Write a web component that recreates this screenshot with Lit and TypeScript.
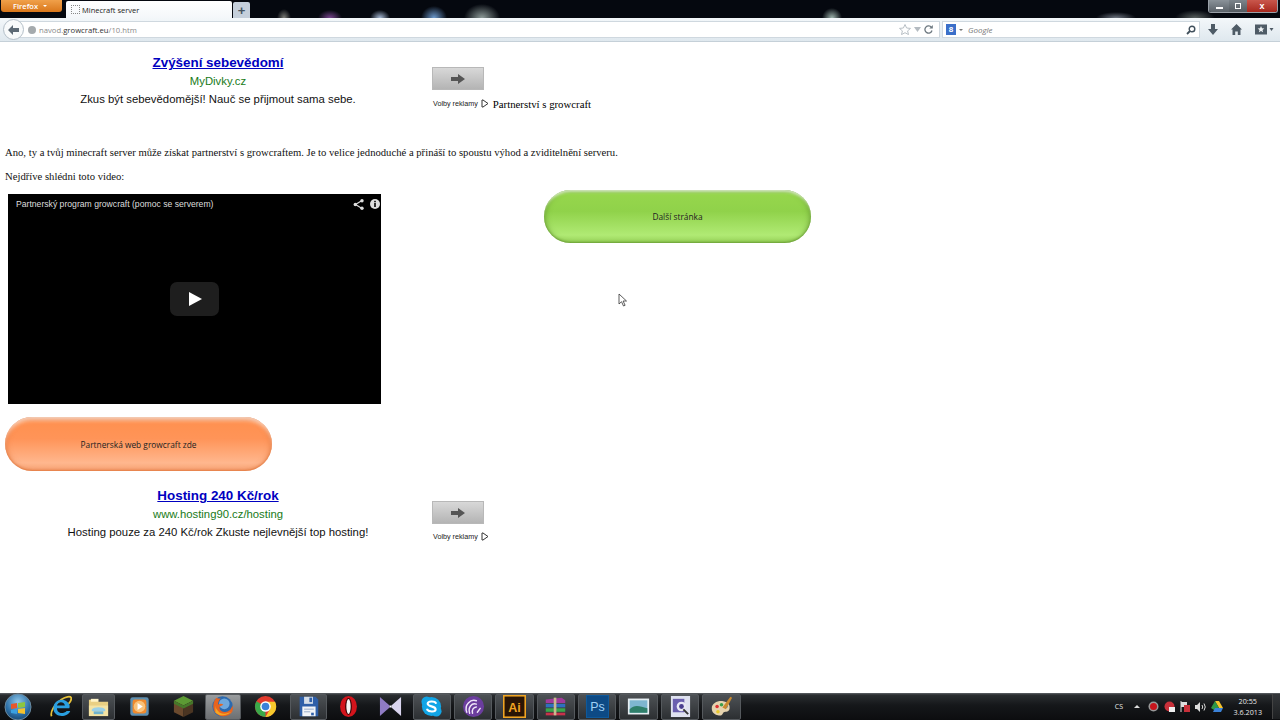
import { LitElement, html, css, svg } from "lit";
import { customElement } from "lit/decorators.js";

const orb = svg`<svg width="30" height="30" viewBox="0 0 30 30"><defs><radialGradient id="o" cx=".5" cy=".3" r=".8"><stop offset="0" stop-color="#8fc6e8"/><stop offset=".6" stop-color="#2b6ea6"/><stop offset="1" stop-color="#123a5e"/></radialGradient></defs><circle cx="15" cy="15" r="13" fill="url(#o)" stroke="#6b8aa0"/><path d="M8 12l6-1v5l-6 1z" fill="#e8562a"/><path d="M15 11l7-1v5l-7 1z" fill="#8cc63f"/><path d="M8 18l6-1v5l-6-1z" fill="#3aa0e0"/><path d="M15 17l7-1v6l-7-1z" fill="#f5c22d"/></svg>`;
const ie = svg`<svg width="26" height="26" viewBox="0 0 26 26"><path d="M3 24C1 20 6 10 14 5c5-3 10-4 11-2 1 3-2 6-3 7" fill="none" stroke="#e8c23a" stroke-width="2"/><path d="M21 15H9c0 6 7 7 11 3h4c-3 8-19 8-19-3S19 2 23 11c.5 1 .5 3-.1 4zM9 12h9c-1-5-8-5-9 0z" fill="#2a9fe0"/></svg>`;
const folder = svg`<svg width="24" height="24" viewBox="0 0 24 24"><path d="M2 5h8l2 2h10v15H2z" fill="#e9cf82"/><path d="M4 4h8v3H4z" fill="#fff4c8"/><path d="M2 11h20v11H2z" fill="#f4e3a3"/><path d="M7 17h10v3H7z" fill="#6fb3cf"/><path d="M5 15c2-3 12-3 14 0v2H5z" fill="#9bd0e6"/></svg>`;
const media = svg`<svg width="20" height="20" viewBox="0 0 20 20"><rect x="2" y="2" width="16" height="16" rx="2" fill="#5f8fb0"/><rect x="4" y="4" width="12" height="12" rx="2" fill="#ef8a2d"/><circle cx="10" cy="10" r="5" fill="#f8c27a"/><path d="M8.300 7l4.500 3-4.500 3z" fill="#fff"/></svg>`;
const grass = svg`<svg width="22" height="24" viewBox="0 0 22 24"><path d="M11 1l10 5-10 5L1 6z" fill="#5c9a34"/><path d="M1 6l10 5v12L1 18z" fill="#6b4a2e"/><path d="M21 6l-10 5v12l10-5z" fill="#4b3522"/><path d="M1 6l10 5v3L1 9zM21 6l-10 5v3l10-5z" fill="#46782a"/></svg>`;
const fox = svg`<svg width="26" height="26" viewBox="0 0 26 26"><circle cx="13" cy="13" r="11.500" fill="#2b6ab0"/><circle cx="15" cy="10" r="6" fill="#6fa8dc"/><path d="M6 3c-4 5-5 13 0 18 5 5 14 4 18-2 1-3 1-5 0-7-1 5-5 8-10 7-4-1-5-4-4-6l4-2c-2-2-5-1-6 0 0-3 1-5 3-7-2 0-4 0-5-1z" fill="#e8641f"/><path d="M5 20c5 4 13 4 18-1-4 2-9 3-13 1-3-2-5-5-5-8z" fill="#f5a623"/></svg>`;
const chrome = svg`<svg width="24" height="24" viewBox="0 0 24 24"><circle cx="12" cy="12" r="11" fill="#e33b2e"/><path d="M12 12L2.500 6.500A11 11 0 0 0 12 23z" fill="#3ba84a"/><path d="M12 7h10a11 11 0 0 1-10 16l5-9z" fill="#f7c92c"/><circle cx="12" cy="12" r="5.500" fill="#fff"/><circle cx="12" cy="12" r="4" fill="#3b82d8"/></svg>`;
const save = svg`<svg width="24" height="26" viewBox="0 0 24 26"><path d="M2 2h18l3 3v19H2z" fill="#2f5fa8"/><rect x="7" y="2" width="10" height="8" fill="#d4dde8"/><rect x="13" y="3" width="3" height="5" fill="#2f5fa8"/><rect x="5" y="13" width="15" height="11" fill="#f2f4f7"/><path d="M7 16h11M7 19h7" stroke="#8ca3c4"/><rect x="15" y="20" width="3" height="3" fill="#2f5fa8"/></svg>`;
const opera = svg`<svg width="20" height="26" viewBox="0 0 20 26"><ellipse cx="10" cy="13" rx="9.500" ry="12" fill="#d3141c"/><ellipse cx="10" cy="13" rx="3.800" ry="9.500" fill="#3a0507"/><ellipse cx="10" cy="13" rx="2.400" ry="8.500" fill="#f5f5f5"/></svg>`;
const vs = svg`<svg width="24" height="22" viewBox="0 0 24 22"><path d="M1 1l10 9v2L1 21z" fill="#8f7bc4"/><path d="M23 1L13 10v2l10 9z" fill="#d9d4ee"/><path d="M11 10h2v2h-2z" fill="#fff"/></svg>`;
const skype = svg`<svg width="24" height="24" viewBox="0 0 24 24"><circle cx="7" cy="7" r="5.500" fill="#12a5e6"/><circle cx="17" cy="17" r="5.500" fill="#12a5e6"/><circle cx="12" cy="12" r="10" fill="#12a5e6"/><path d="M16.500 8.300C15.500 6.300 8 6 8 9.200c0 3.300 8.300 2 8.300 5.600 0 3.200-7 3-8.800.4" fill="none" stroke="#fff" stroke-width="2.200" stroke-linecap="round"/></svg>`;
const torrent = svg`<svg width="24" height="24" viewBox="0 0 24 24"><circle cx="12" cy="12" r="11" fill="#6b3d9e"/><g fill="none" stroke="#efe6f8" stroke-width="1.500" stroke-linecap="round"><path d="M5 18C2 10 9 4 15 6"/><path d="M8 19C6 13 10 8 15 9.500"/><path d="M11 19c-1-4 1-6 4-6.500"/><path d="M16 18l3-4"/></g></svg>`;
const ai = svg`<svg width="22" height="22" viewBox="0 0 22 22"><rect width="22" height="22" fill="#f0a422"/><rect x="1.500" y="1.500" width="19" height="19" fill="#2a1505"/><text x="11" y="16" text-anchor="middle" font-family="Liberation Sans" font-weight="700" font-size="12" fill="#f0a422">Ai</text></svg>`;
const rar = svg`<svg width="26" height="22" viewBox="0 0 26 22"><path d="M2 3l18-2 4 3v3H2z" fill="#a03a9a"/><path d="M2 8h22v4H2z" fill="#2f6fc0"/><path d="M2 13h22v4H2z" fill="#3aa54a"/><path d="M2 18h22v3H2z" fill="#c8324a"/><rect x="11" y="1" width="3" height="20" fill="#c9b98f"/></svg>`;
const ps = svg`<svg width="24" height="24" viewBox="0 0 24 24"><rect width="24" height="24" fill="#0f5a9c"/><rect x="1" y="1" width="22" height="22" fill="#0d4a85"/><text x="12" y="17" text-anchor="middle" font-family="Liberation Sans" font-size="13" fill="#9fd0f5">Ps</text></svg>`;
const photo = svg`<svg width="26" height="22" viewBox="0 0 26 22"><rect x="1" y="2" width="24" height="18" fill="#e6eef2"/><rect x="3" y="4" width="20" height="14" fill="#7fb6d0"/><path d="M3 14c6-6 12-3 20-1v5H3z" fill="#2f7f6a"/></svg>`;
const note = svg`<svg width="22" height="24" viewBox="0 0 22 24"><rect x="1" y="1" width="20" height="22" fill="#dfe2f0"/><rect x="3" y="4" width="12" height="14" fill="#6a5fae"/><circle cx="12" cy="12" r="5" fill="#e8e8f4"/><circle cx="12" cy="12" r="2.500" fill="#4a3f8f"/><path d="M14 15l5 5" stroke="#333" stroke-width="2"/></svg>`;
const paint = svg`<svg width="26" height="26" viewBox="0 0 26 26"><path d="M2 15C2 9 9 6 15 7c6 1 8 5 7 9-1 4-6 2-7 4s-2 4-6 3c-4-1-7-3-7-8z" fill="#e6d3ae"/><circle cx="8" cy="13" r="2" fill="#d33"/><circle cx="13" cy="11" r="2" fill="#3a9e4a"/><circle cx="18" cy="13" r="2" fill="#2f6fc0"/><circle cx="9" cy="19" r="2" fill="#e8c82a"/><path d="M14 14L23 2l2 1-7 13z" fill="#c98a2f"/></svg>`;

const tasks: { w: number; icon: unknown; on?: boolean; lit?: boolean }[] = [
  { w: 40, icon: ie },
  { w: 36, icon: folder, on: true },
  { w: 47, icon: media },
  { w: 40, icon: grass },
  { w: 39, icon: fox, on: true, lit: true },
  { w: 46, icon: chrome },
  { w: 40, icon: save, on: true },
  { w: 41, icon: opera },
  { w: 42, icon: vs },
  { w: 41.4, icon: skype, on: true },
  { w: 41.4, icon: torrent, on: true },
  { w: 41.4, icon: ai, on: true },
  { w: 41.4, icon: rar, on: true },
  { w: 41.4, icon: ps, on: true },
  { w: 41.4, icon: photo, on: true },
  { w: 41.4, icon: note, on: true },
  { w: 41.4, icon: paint, on: true },
];

const arrowBtn = html`<div class="arrow-btn"><svg width="14" height="10" viewBox="0 0 14 10"><path d="M0 3h7V0l7 5-7 5V7H0z" fill="#555"/></svg></div>`;
const volby = html`<div class="volby">Volby reklamy <svg width="8" height="9" viewBox="0 0 8 9"><path d="M1 1v7h1L7 4.500 2 1z" fill="none" stroke="#333"/></svg></div>`;

@customElement("app-root")
export class AppRoot extends LitElement {
  static styles = css`
    :host { display: block; width: 1280px; height: 720px; position: relative; overflow: hidden; background: #fff; }
    .win { display: flex; flex-direction: column; height: 720px; }
    .titlebar {
      height: 18px; flex: none; display: flex; align-items: flex-end; position: relative; background:
        radial-gradient(ellipse 7px 9px at 284px 18px, #7f7f7a, transparent),
        radial-gradient(ellipse 12px 8px at 330px 18px, #7a4590, transparent),
        radial-gradient(ellipse 10px 8px at 380px 18px, #a9bcd8, transparent),
        radial-gradient(ellipse 13px 12px at 434px 18px, #6d9bd0, transparent),
        radial-gradient(ellipse 18px 14px at 482px 18px, #8f9c9a, transparent),
        radial-gradient(ellipse 10px 10px at 832px 18px, #9fb5ae, transparent),
        radial-gradient(ellipse 20px 6px at 1116px 18px, #6d7480, transparent),
        radial-gradient(ellipse 20px 8px at 1195px 18px, #59605f, transparent),
        #05080f;
    }
    .ffx {
      position: absolute; left: 1px; top: 0; width: 61px; height: 12px; background: linear-gradient(#f0a04a, #d9761a);
      border-radius: 0 0 3px 3px; color: #fff; font: 600 7.500px "Open Sans", sans-serif; display: flex; align-items: center; gap: 5px; padding-left: 12px; box-sizing: border-box;
    }
    .ffx i { width: 0; height: 0; border: 2.500px solid transparent; border-top-color: #fff; margin-top: 2px; }
    .tab {
      margin-left: 66px; width: 166px; height: 17px; background: linear-gradient(#fff, #f4f7fa); border-radius: 2px 2px 0 0;
      display: flex; align-items: center; padding-left: 5px; box-sizing: border-box; font: 7.500px "Open Sans", sans-serif; color: #222; gap: 2px;
    }
    .tab b { width: 9px; height: 9px; border: 1px dotted #888; box-sizing: border-box; }
    .plus { margin-left: 1px; width: 17px; height: 16px; background: #c5cfdb; border-radius: 2px 2px 0 0; display: flex; align-items: center; justify-content: center; color: #46535f; font: 700 13px "Liberation Sans", sans-serif; }
    .caps { position: absolute; right: 2px; top: 0; display: flex; height: 12px; border: 1px solid #9aa0a8; border-top: none; border-radius: 0 0 3px 3px; overflow: hidden; }
    .caps span { display: flex; align-items: center; justify-content: center; color: #fff; font: 700 9px "Liberation Sans", sans-serif; }
    .c1 { width: 20px; background: linear-gradient(#8a9299, #5a6168); }
    .c2 { width: 18px; background: linear-gradient(#7c848b, #545a60); }
    .c3 { width: 30px; background: linear-gradient(#c9574c, #a8281e); }
    .c1 u { display: block; width: 7px; height: 2px; background: #fff; margin-top: 4px; }
    .c2 u { display: block; width: 6px; height: 6px; border: 1px solid #fff; box-sizing: border-box; }
    .toolbar { height: 24px; flex: none; background: linear-gradient(#f3f7fa, #dfe8ee); border-bottom: 1px solid #c5d0d8; box-sizing: border-box; display: flex; align-items: center; position: relative; padding-right: 6px; }
    .back { width: 21px; height: 21px; margin-left: 3px; border-radius: 50%; background: #f8fafb; border: 1px solid #b4bfc8; box-sizing: border-box; display: flex; align-items: center; justify-content: center; flex: none; position: relative; z-index: 1; }
    .url { margin-left: -7px; width: 923px; height: 17px; background: #fff; border: 1px solid #cfd8df; box-sizing: border-box; display: flex; align-items: center; padding-left: 10px; font: 7.700px "Open Sans", sans-serif; color: #8a8a8a; flex: none; }
    .url .g { width: 8px; height: 8px; border-radius: 50%; background: #a5aaad; margin-right: 3px; }
    .url strong { font-weight: 400; color: #333; }
    .url .spacer { flex: 1; }
    .url .r { display: flex; align-items: center; gap: 3px; padding-right: 6px; }
    .search { margin-left: 2px; width: 258px; height: 17px; background: #fff; border: 1px solid #cfd8df; box-sizing: border-box; display: flex; align-items: center; padding: 0 3px; font: italic 8px "Open Sans", sans-serif; color: #777; flex: none; }
    .search .g8 { width: 10px; height: 11px; background: #3b6fc9; color: #fff; font: 700 8px "Liberation Sans", sans-serif; display: flex; align-items: center; justify-content: center; margin-right: 3px; }
    .search .drop { width: 0; height: 0; border: 2px solid transparent; border-top-color: #777; margin: 2px 5px 0 0; }
    .search .spacer { flex: 1; }
    .tools { display: flex; align-items: center; margin-left: 8px; gap: 13px; }
    .page { flex: 1; min-height: 0; display: flex; flex-direction: column; background: #fff; color: #000; }
    .adrow { display: flex; height: 96px; flex: none; }
    .ad { width: 436px; flex: none; text-align: center; font-family: "Liberation Sans", Arial, sans-serif; padding-top: 11px; box-sizing: border-box; }
    .ad a { display: block; font-size: 13.400px; font-weight: 700; line-height: 20px; color: #0000c0; text-decoration: underline; }
    .ad .host { font-size: 11.300px; line-height: 17px; color: #187a18; }
    .ad .desc { font-size: 11.350px; line-height: 19px; color: #111; }
    .side { padding-top: 25px; display: flex; flex-direction: column; }
    .arrow-btn { width: 52px; height: 23px; background: linear-gradient(#d8d8d8, #b4b4b4); border: 1px solid #b8b8b8; box-sizing: border-box; display: flex; align-items: center; justify-content: center; }
    .vline { display: flex; align-items: center; margin-top: 6px; height: 14px; }
    .volby { font: 7.200px "Liberation Sans", Arial, sans-serif; display: flex; align-items: center; gap: 3px; margin-left: 1px; color: #222; white-space: nowrap; }
    .partner { font: 10.800px "Liberation Serif", serif; margin-left: 4px; margin-top: 1px; }
    .para { font: 10.670px/14px "Liberation Serif", serif; margin: 0 0 0 5px; color: #111; }
    .p1 { margin-top: 7px; }
    .p2 { margin-top: 10px; }
    .mid { display: flex; margin-top: 7px; flex: none; }
    .video { width: 373px; height: 210px; margin: 4px 0 0 8px; background: #000; position: relative; flex: none; display: flex; flex-direction: column; }
    .vhead { display: flex; align-items: center; height: 20px; padding: 0 1px 0 8px; color: #ddd; font: 8.650px "Liberation Sans", Arial, sans-serif; }
    .vhead .spacer { flex: 1; }
    .vhead svg { margin-left: 6px; }
    .play { position: absolute; left: 162px; top: 88px; width: 49px; height: 34px; border-radius: 7px; background: #1e1e1e; display: flex; align-items: center; justify-content: center; }
    .pill { border-radius: 27px; display: flex; align-items: center; justify-content: center; font: 8.350px "Open Sans", "Liberation Sans", sans-serif; color: #222; box-sizing: border-box; flex: none; position: relative; }
    .green { width: 267px; height: 53px; margin-left: 163px; background: linear-gradient(#7ab83c 0%, #96d64c 8%, #90d24a 40%, #b0ea74 85%, #96d058 100%);
      box-shadow: inset 0 4px 3px -2px rgba(255,255,255,.7), inset 0 -1px 2px rgba(90,140,40,.6), inset 4px 0 5px -2px rgba(90,140,40,.5), inset -4px 0 5px -2px rgba(90,140,40,.5); }
    .orange { width: 267px; height: 54px; margin: 13px 0 0 5px; background: linear-gradient(#e8834a 0%, #ff9150 10%, #ff9458 40%, #ffb78e 85%, #f5a070 100%);
      box-shadow: inset 0 5px 4px -2px rgba(255,255,255,.65), inset 0 -1px 2px rgba(220,110,50,.6), inset 4px 0 5px -2px rgba(220,110,50,.5), inset -4px 0 5px -2px rgba(220,110,50,.5); }
    .adrow2 { margin-top: 13px; }
    .ad2 { padding-top: 2px; }
    .side2 { padding-top: 17px; }
    .side2 .vline { margin-top: 5px; }
    .cursor { position: absolute; left: 618px; top: 293px; }
    .taskbar { height: 27px; flex: none; background: linear-gradient(#5f6468 0, #2a2d30 2px, #15171a 45%, #0c0d0f 100%); display: flex; align-items: center; position: relative; }
    .start { width: 40px; flex: none; display: flex; justify-content: center; padding-right: 4px; box-sizing: border-box; }
    .task { height: 27px; flex: none; display: flex; align-items: center; justify-content: center; position: relative; }
    .task.on::before { content: ""; position: absolute; top: 1px; bottom: 0; left: 1.500px; right: 1.500px; background: linear-gradient(#4d5155, #2c2f32); border: 1px solid #55595d; border-radius: 2px; box-sizing: border-box; }
    .task.lit::before { background: linear-gradient(#9a9d9f, #6c6f72); }
    .task svg { position: relative; width: 23px; height: 23px; }
    .tray { margin-left: auto; display: flex; align-items: center; color: #e8e8e8; font: 7px "Open Sans", sans-serif; }
    .tray .cs { margin-right: 11px; }
    .tray .up { width: 0; height: 0; border: 3px solid transparent; border-bottom-color: #ddd; margin: -3px 7.500px 0 0; }
    .tray svg { margin-right: 5px; }
    .clock { text-align: center; line-height: 11px; font-size: 7.200px; margin: 0 10px 0 6px; }
    .show { width: 8px; height: 25px; background: linear-gradient(#34373a, #1d1f21); border-left: 1px solid #444; box-sizing: border-box; }
  `;

  render() {
    return html`<div class="win">
      <div class="titlebar">
        <div class="ffx">Firefox<i></i></div>
        <div class="tab"><b></b>Minecraft server</div>
        <div class="plus">+</div>
        <div class="caps"><span class="c1"><u></u></span><span class="c2"><u></u></span><span class="c3">x</span></div>
      </div>
      <div class="toolbar">
        <div class="back"><svg width="11" height="10" viewBox="0 0 11 10"><path d="M5 0L0 5l5 5V7h6V3H5z" fill="#5d6a75"/></svg></div>
        <div class="url">
          <span class="g"></span><span>navod.<strong>growcraft.eu</strong>/10.htm</span>
          <span class="spacer"></span>
          <span class="r">
            <svg width="12" height="11" viewBox="0 0 12 11"><path d="M6 .500l1.600 3.500 3.900.4-2.900 2.500.9 3.700L6 8.700l-3.500 1.900.9-3.700L.500 4.400l3.900-.4z" fill="none" stroke="#b8bfc5"/></svg>
            <svg width="7" height="5" viewBox="0 0 7 5"><path d="M0 0h7L3.500 5z" fill="#b4bbc1"/></svg>
            <svg width="9" height="9" viewBox="0 0 9 9"><path d="M7.500 2.500A3.600 3.600 0 1 0 8 5.500" fill="none" stroke="#6d7880" stroke-width="1.300"/><path d="M8.800 0v3.500H5.300z" fill="#6d7880"/></svg>
          </span>
        </div>
        <div class="search">
          <span class="g8">8</span><span class="drop"></span><span>Google</span><span class="spacer"></span>
          <svg width="10" height="10" viewBox="0 0 10 10"><circle cx="6" cy="4" r="2.800" fill="none" stroke="#41505c" stroke-width="1.400"/><path d="M4 6L1 9" stroke="#41505c" stroke-width="1.800"/></svg>
        </div>
        <div class="tools">
          <svg width="10" height="11" viewBox="0 0 10 11"><path d="M3 0h4v5h3l-5 6-5-6h3z" fill="#4e5b66"/></svg>
          <svg width="11" height="11" viewBox="0 0 11 11"><path d="M5.500 0L11 5.500H9.500V11H6.800V7.500H4.200V11H1.500V5.500H0z" fill="#4e5b66"/></svg>
          <svg width="19" height="11" viewBox="0 0 19 11"><rect width="12" height="10" y=".500" fill="#4e5b66"/><path d="M6 2l1 2.200 2.300.2-1.800 1.500.6 2.300L6 7l-2.100 1.200.6-2.300L2.700 4.400 5 4.200z" fill="#eef2f5"/><path d="M14.500 4h4l-2 3z" fill="#4e5b66"/></svg>
        </div>
      </div>
      <div class="page">
        <div class="adrow">
          <div class="ad">
            <a>Zvýšení sebevědomí</a>
            <div class="host">MyDivky.cz</div>
            <div class="desc">Zkus být sebevědomější! Nauč se přijmout sama sebe.</div>
          </div>
          <div class="side" style="margin-left:-4px">
            ${arrowBtn}
            <div class="vline">${volby}<span class="partner">Partnerství s growcraft</span></div>
          </div>
        </div>
        <p class="para p1">Ano, ty a tvůj minecraft server může získat partnerství s growcraftem. Je to velice jednoduché a přináší to spoustu výhod a zviditelnění serveru.</p>
        <p class="para p2">Nejdříve shlédni toto video:</p>
        <div class="mid">
          <div class="video">
            <div class="vhead">
              <span>Partnerský program growcraft (pomoc se serverem)</span><span class="spacer"></span>
              <svg width="11" height="11" viewBox="0 0 11 11"><path d="M9 1.500L2.500 5.500 9 9.500" fill="none" stroke="#ddd" stroke-width="1.200"/><circle cx="9" cy="1.800" r="1.700" fill="#ddd"/><circle cx="2.300" cy="5.500" r="1.700" fill="#ddd"/><circle cx="9" cy="9.200" r="1.700" fill="#ddd"/></svg>
              <svg width="10" height="10" viewBox="0 0 10 10"><circle cx="5" cy="5" r="5" fill="#ddd"/><rect x="4.200" y="4" width="1.600" height="4" fill="#000"/><rect x="4.200" y="1.800" width="1.600" height="1.500" fill="#000"/></svg>
            </div>
            <div class="play"><svg width="14" height="14" viewBox="0 0 14 14"><path d="M1 0l13 7-13 7z" fill="#fff"/></svg></div>
          </div>
          <div class="pill green">Další stránka</div>
        </div>
        <div class="pill orange">Partnerská web growcraft zde</div>
        <div class="adrow adrow2">
          <div class="ad ad2">
            <a>Hosting 240 Kč/rok</a>
            <div class="host">www.hosting90.cz/hosting</div>
            <div class="desc">Hosting pouze za 240 Kč/rok Zkuste nejlevnější top hosting!</div>
          </div>
          <div class="side side2" style="margin-left:-4px">
            ${arrowBtn}
            <div class="vline">${volby}</div>
          </div>
        </div>
      </div>
      <div class="taskbar">
        <div class="start">${orb}</div>
        ${tasks.map((t) => html`<div class="task ${t.on ? "on" : ""} ${t.lit ? "lit" : ""}" style="width:${t.w}px">${t.icon}</div>`)}
        <div class="tray">
          <span class="cs">CS</span><span class="up"></span>
          <svg width="11" height="11" viewBox="0 0 11 11"><circle cx="5.500" cy="5.500" r="5" fill="#999"/><circle cx="5.500" cy="5.500" r="3.500" fill="#c8141c"/></svg>
          <svg width="11" height="11" viewBox="0 0 11 11"><circle cx="5.500" cy="5.500" r="5" fill="#c8303a"/><rect x="5" y="6" width="6" height="5" fill="#eee"/></svg>
          <svg width="10" height="11" viewBox="0 0 10 11"><path d="M1 0v11" stroke="#ddd"/><path d="M1 1h6v5H1z" fill="#ddd"/><rect x="4" y="4" width="6" height="7" fill="#c8303a"/></svg>
          <svg width="11" height="10" viewBox="0 0 11 10"><path d="M0 3h2l3-3v10L2 7H0z" fill="#ddd"/><path d="M7 3q1.500 2 0 4M9 1.500q2.500 3.500 0 7" fill="none" stroke="#ddd"/></svg>
          <svg width="12" height="11" viewBox="0 0 12 11"><path d="M4 0h4l4 7H8z" fill="#f5c22d"/><path d="M4 0l4 7-2 4L0 7z" fill="#2f9e4a" opacity=".95"/><path d="M2 11l2-4h8l-2 4z" fill="#3b82d8"/></svg>
          <div class="clock">20:55<br />3.6.2013</div>
          <div class="show"></div>
        </div>
      </div>
      <svg class="cursor" width="10" height="14" viewBox="0 0 10 14"><path d="M1 1v10l2.500-2.300L5.500 13l1.600-.7-2-4.300H8.500z" fill="#fff" stroke="#333" stroke-width=".8"/></svg>
    </div>`;
  }
}
